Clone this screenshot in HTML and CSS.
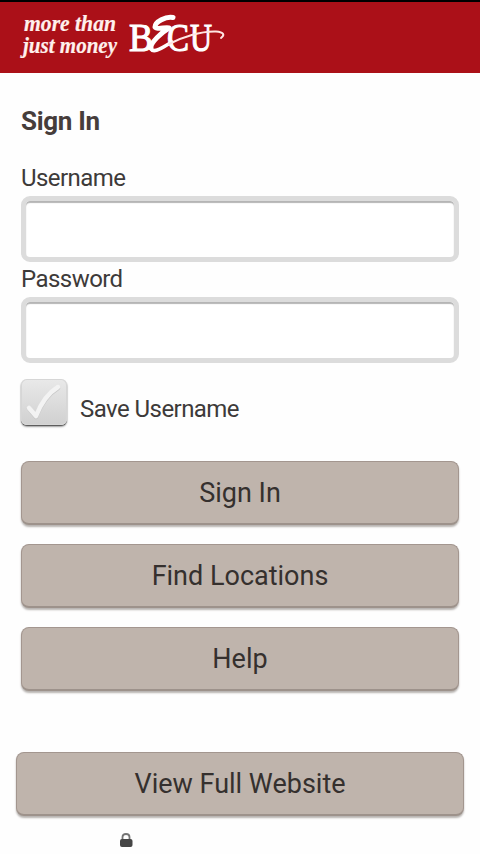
FILE: index.html
```html
<!DOCTYPE html>
<html lang="en">
<head>
<meta charset="utf-8">
<title>BECU - Sign In</title>
<link rel="stylesheet" href="styles.css">
</head>
<body>
<header class="masthead">
  <svg class="logo" width="240" height="71" viewBox="0 2 240 71" role="img" aria-label="BECU">
    <g class="tagline">
      <text x="24" y="31" textLength="92" lengthAdjust="spacingAndGlyphs">more than</text>
      <text x="23" y="52.500" textLength="94" lengthAdjust="spacingAndGlyphs">just money</text>
    </g>
    <g class="brand">
      <text x="129" y="50.5" textLength="24" lengthAdjust="spacingAndGlyphs">B</text>
      <text x="167" y="50.5" textLength="22" lengthAdjust="spacingAndGlyphs">C</text>
      <text x="190" y="50.5" textLength="22" lengthAdjust="spacingAndGlyphs">U</text>
    </g>
    <path class="swash-thick" d="M173 17.500C166 16 155 22 155 27C157 30 165 27 169 28C162 32 150 43 151 48"/>
    <path class="swash-mid" d="M151 49C154 54 163 47 172 42"/>
    <path class="swash-thin" d="M169 44C182 37 201 31 216 31.500C224 32 225 35 221 38"/>
  </svg>
</header>
<main>
  <form class="login">
    <h1>Sign In</h1>
    <label for="user">Username</label>
    <input id="user" class="field" type="text">
    <label for="pass">Password</label>
    <input id="pass" class="field" type="password">
    <div class="save">
      <span class="check">
        <svg width="46" height="46" viewBox="0 0 46 46" aria-hidden="true"><path class="tick-shade" d="M8 29.500L15 38C20 25 27 15 37 9"/><path class="tick" d="M8 29L15 37C20 24 27 14 37 8"/></svg>
      </span>
      <span class="save-label">Save Username</span>
    </div>
    <div class="actions">
      <button class="btn" type="button">Sign In</button>
      <button class="btn" type="button">Find Locations</button>
      <button class="btn" type="button">Help</button>
    </div>
  </form>
</main>
<footer>
  <button class="btn" type="button">View Full Website</button>
  <svg class="lock" width="14" height="16" viewBox="0 0 14 16" aria-hidden="true"><path d="M3.500 8V5Q3.500 2 7 2T10.500 5V8" fill="none" stroke="#747474" stroke-width="1.800"/><rect x="1" y="7" width="12.500" height="8" rx="2" fill="#454545"/></svg>
</footer>
</body>
</html>
```
FILE: styles.css
```css
* { box-sizing: border-box; }
body {
  margin: 0;
  height: 854px;
  overflow: hidden;
  background: #fefefe;
  color: #3d3a39;
  font-family: Roboto, "Liberation Sans", sans-serif;
  font-size: 24px;
}
.masthead { height: 73px; border-top: 2px solid #000; background: #ab1018; }
.logo { display: block; }
.logo text { font-family: "Liberation Serif", serif; fill: #fff0ed; }
.tagline text { font-size: 24px; font-style: italic; font-weight: bold; stroke: #fff0ed; stroke-width: .2; }
.logo .brand text { font-size: 41px; fill: #fff; stroke: #fff; stroke-width: 1.2; }
.swash-thick, .swash-mid, .swash-thin { fill: none; stroke: #fff; stroke-linecap: round; stroke-linejoin: round; }
.swash-thick { stroke-width: 5; }
.swash-mid { stroke-width: 3.5; }
.swash-thin { stroke-width: 2; stroke: #ffe5e2; }
.login { display: flex; flex-direction: column; padding: 32px 21px 0; }
h1 { margin: 0 0 26px; font-size: 26px; line-height: 32px; font-weight: bold; color: #463d3b; letter-spacing: -.3px; }
label { height: 33px; line-height: 31px; letter-spacing: -.55px; }
.field {
  width: 438px;
  height: 66px;
  margin: 0;
  padding: 0 12px;
  border: 5px solid #dcdcdc;
  border-radius: 9px;
  background: #fff;
  box-shadow: inset 0 2px 1px #b5b5b5;
  font: inherit;
  outline: 0;
}
.field + label { height: 35px; line-height: 35px; }
.save { display: flex; gap: 13px; margin-top: 16px; height: 50px; }
.check {
  width: 46px;
  height: 46px;
  border-radius: 6px;
  background: linear-gradient(#e9e9e9, #d0d0d0);
  box-shadow: inset 0 0 0 1px #d6d6d6, 0 1px 1px #555, 0 2px 2px #aaa;
}
.check svg { display: block; }
.tick, .tick-shade { fill: none; stroke: #f3f3f3; stroke-width: 4.5; stroke-linecap: round; stroke-linejoin: round; }
.tick-shade { stroke: #c8c8c8; }
.save-label { line-height: 61px; letter-spacing: -.55px; }
.actions { display: flex; flex-direction: column; gap: 19px; margin-top: 32px; }
.btn {
  display: block;
  width: 100%;
  height: 64px;
  padding: 2px 0 0;
  border: 1px solid #a3968f;
  border-bottom: 2px solid #9d928b;
  border-radius: 8px;
  background: #bfb4ac;
  box-shadow: 0 2px 2px #b7b3b0;
  color: #35302e;
  font: 27px/59px Roboto, "Liberation Sans", sans-serif;
}
footer { padding: 61px 16px 0; }
.lock { display: block; margin: 16px 0 0 103px; }
```
